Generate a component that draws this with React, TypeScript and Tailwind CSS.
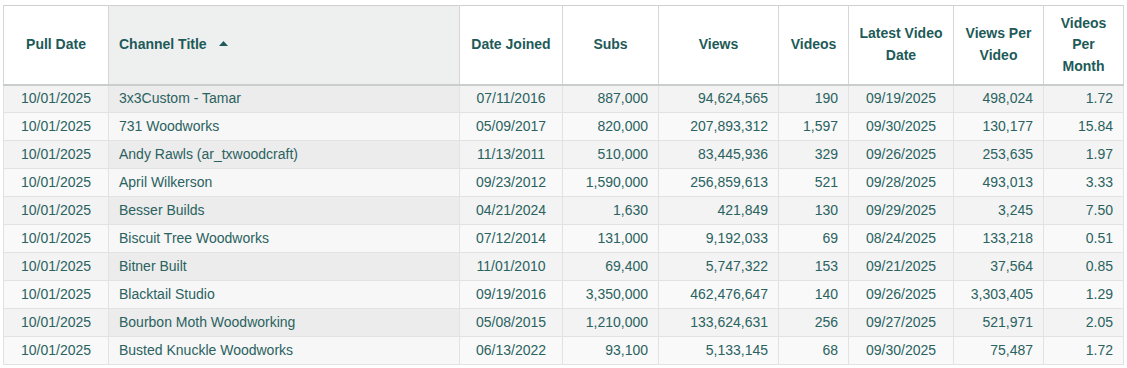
import React from 'react';

type Row = {
  pull: string;
  title: string;
  joined: string;
  subs: string;
  views: string;
  videos: string;
  latest: string;
  vpv: string;
  vpm: string;
};

const rows: Row[] = [
  { pull: '10/01/2025', title: '3x3Custom - Tamar', joined: '07/11/2016', subs: '887,000', views: '94,624,565', videos: '190', latest: '09/19/2025', vpv: '498,024', vpm: '1.72' },
  { pull: '10/01/2025', title: '731 Woodworks', joined: '05/09/2017', subs: '820,000', views: '207,893,312', videos: '1,597', latest: '09/30/2025', vpv: '130,177', vpm: '15.84' },
  { pull: '10/01/2025', title: 'Andy Rawls (ar_txwoodcraft)', joined: '11/13/2011', subs: '510,000', views: '83,445,936', videos: '329', latest: '09/26/2025', vpv: '253,635', vpm: '1.97' },
  { pull: '10/01/2025', title: 'April Wilkerson', joined: '09/23/2012', subs: '1,590,000', views: '256,859,613', videos: '521', latest: '09/28/2025', vpv: '493,013', vpm: '3.33' },
  { pull: '10/01/2025', title: 'Besser Builds', joined: '04/21/2024', subs: '1,630', views: '421,849', videos: '130', latest: '09/29/2025', vpv: '3,245', vpm: '7.50' },
  { pull: '10/01/2025', title: 'Biscuit Tree Woodworks', joined: '07/12/2014', subs: '131,000', views: '9,192,033', videos: '69', latest: '08/24/2025', vpv: '133,218', vpm: '0.51' },
  { pull: '10/01/2025', title: 'Bitner Built', joined: '11/01/2010', subs: '69,400', views: '5,747,322', videos: '153', latest: '09/21/2025', vpv: '37,564', vpm: '0.85' },
  { pull: '10/01/2025', title: 'Blacktail Studio', joined: '09/19/2016', subs: '3,350,000', views: '462,476,647', videos: '140', latest: '09/26/2025', vpv: '3,303,405', vpm: '1.29' },
  { pull: '10/01/2025', title: 'Bourbon Moth Woodworking', joined: '05/08/2015', subs: '1,210,000', views: '133,624,631', videos: '256', latest: '09/27/2025', vpv: '521,971', vpm: '2.05' },
  { pull: '10/01/2025', title: 'Busted Knuckle Woodworks', joined: '06/13/2022', subs: '93,100', views: '5,133,145', videos: '68', latest: '09/30/2025', vpv: '75,487', vpm: '1.72' },
];

const th = 'border-x border-[#d6d6d6] px-[10px] py-0 font-bold text-center align-middle';

function SortUp() {
  return (
    <svg width="9" height="5" viewBox="0 0 9 5" className="inline-block ml-[12px] mb-[3px]">
      <path d="M4.5 0 L9 5 L0 5 Z" fill="#1d5a58" />
    </svg>
  );
}

export default function App() {
  return (
    <div className="pt-[5px] pl-[3px] bg-white min-h-[368px]" style={{ fontFamily: '"Liberation Sans", Arial, sans-serif' }}>
      <table className="w-[1120px] table-fixed border-collapse border border-[#cfcfcf] text-[14px]">
        <colgroup>
          <col className="w-[105px]" />
          <col className="w-[351px]" />
          <col className="w-[103px]" />
          <col className="w-[96px]" />
          <col className="w-[120px]" />
          <col className="w-[70px]" />
          <col className="w-[105px]" />
          <col className="w-[90px]" />
          <col className="w-[80px]" />
        </colgroup>
        <thead>
          <tr className="h-[79px] border-b-2 border-[#c9cecd] text-[#1d5a58] leading-[21.5px] bg-white">
            <th className={th}>Pull Date</th>
            <th className={`${th} !text-left bg-[#eef0ef]`}>
              Channel Title
              <SortUp />
            </th>
            <th className={th}>Date Joined</th>
            <th className={th}>Subs</th>
            <th className={th}>Views</th>
            <th className={th}>Videos</th>
            <th className={th}>
              Latest Video
              <br />
              Date
            </th>
            <th className={th}>
              Views Per
              <br />
              Video
            </th>
            <th className={th}>
              Videos
              <br />
              Per
              <br />
              Month
            </th>
          </tr>
        </thead>
        <tbody className="text-[#2a625f]">
          {rows.map((r, i) => {
            const odd = i % 2 === 0;
            const td = 'border border-[#e2e2e2] px-[10px] py-0 whitespace-nowrap';
            return (
              <tr key={r.title} className={`h-[28px] ${odd ? 'bg-[#f3f3f3]' : 'bg-[#f9f9f9]'}`}>
                <td className={`${td} text-center`}>{r.pull}</td>
                <td className={`${td} text-left ${odd ? 'bg-[#ececec]' : 'bg-[#f7f7f7]'}`}>{r.title}</td>
                <td className={`${td} text-center`}>{r.joined}</td>
                <td className={`${td} text-right`}>{r.subs}</td>
                <td className={`${td} text-right`}>{r.views}</td>
                <td className={`${td} text-right`}>{r.videos}</td>
                <td className={`${td} text-center`}>{r.latest}</td>
                <td className={`${td} text-right`}>{r.vpv}</td>
                <td className={`${td} text-right`}>{r.vpm}</td>
              </tr>
            );
          })}
        </tbody>
      </table>
    </div>
  );
}
